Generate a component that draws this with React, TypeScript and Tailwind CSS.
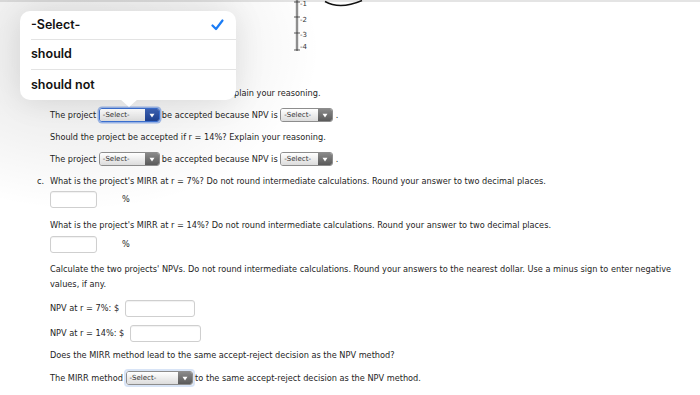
import React from "react";

const body = "font-['DejaVu_Sans',Verdana,sans-serif] text-[8.2px] text-[#1e1e1e]";

function Select({ w, focused = false }: { w: number; focused?: boolean }) {
  return (
    <span
      className={`inline-flex h-[14px] items-stretch overflow-hidden rounded-[3px] border align-middle ${
        focused
          ? "border-[#3b6fd0] shadow-[0_0_0_1.5px_rgba(80,130,220,0.55)]"
          : "border-[#8d8d8d]"
      }`}
      style={{ width: w }}
    >
      <span className="flex flex-1 items-center bg-gradient-to-b from-[#ffffff] to-[#dcdcdc] pl-[3px] text-[7px] leading-none text-[#333]">
        -Select-
      </span>
      <span
        className={`flex w-[14px] items-center justify-center ${
          focused
            ? "bg-gradient-to-b from-[#3d63b5] to-[#1d3f8e]"
            : "bg-gradient-to-b from-[#8a8a8a] to-[#5a5a5a]"
        }`}
      >
        <svg width="6" height="5" viewBox="0 0 6 5">
          <path d="M0.5 0.8 L5.5 0.8 L3 4.4 Z" fill="#fff" />
        </svg>
      </span>
    </span>
  );
}

function Input({ w }: { w: number }) {
  return (
    <span
      className="inline-block h-[17px] rounded-[3px] border border-[#cfcfcf] bg-white shadow-[inset_0_1px_1px_rgba(0,0,0,0.06)]"
      style={{ width: w }}
    />
  );
}

function Axis() {
  const ticks = [];
  for (let y = 1; y <= 50; y += 2) ticks.push(y);
  return (
    <svg width="120" height="56" viewBox="0 0 120 56">
      <line x1="7" y1="0" x2="7" y2="51" stroke="#444" strokeWidth="1" />
      {ticks.map((y) => (
        <line key={y} x1="5.5" y1={y} x2="8.5" y2={y} stroke="#666" strokeWidth="0.6" />
      ))}
      {[2, 17, 33, 50].map((y) => (
        <line key={"m" + y} x1="4" y1={y} x2="10" y2={y} stroke="#333" strokeWidth="0.8" />
      ))}
      <text x="10" y="6" fontSize="7" fill="#333" fontFamily="DejaVu Sans">-1</text>
      <text x="10" y="22" fontSize="7" fill="#333" fontFamily="DejaVu Sans">-2</text>
      <text x="10" y="37" fontSize="7" fill="#333" fontFamily="DejaVu Sans">-3</text>
      <text x="10" y="49" fontSize="7" fill="#333" fontFamily="DejaVu Sans">-4</text>
      <path d="M35 1.5 Q50 10 72 0.5" stroke="#111" strokeWidth="1.5" fill="none" />
    </svg>
  );
}

export default function App() {
  return (
    <div className="relative h-[395px] w-[700px] overflow-hidden bg-white">
      <div className="h-[2px] w-full bg-[#e4e4e4]" />
      {/* soft grey haze around the popover */}
      <div className="pointer-events-none absolute left-[-160px] top-[-110px] h-[320px] w-[480px] rounded-full bg-[radial-gradient(closest-side,rgba(0,0,0,0.09),rgba(0,0,0,0.05)_55%,rgba(0,0,0,0))]" />

      <div className={`${body} relative pl-[50px]`}>
        <div className="h-[82px] pl-[240px]">
          <div className="-mt-[2px]">
            <Axis />
          </div>
        </div>

        <div className="flex h-[22px] items-center">
          Should the project be accepted if r = 7%? Explain your reasoning.
        </div>
        <div className="flex h-[22px] items-center">
          The project&nbsp;<Select w={61} focused />
          <span className="ml-[2px]">be accepted because NPV is</span>&nbsp;
          <Select w={53} />
          &nbsp;.
        </div>
        <div className="flex h-[22px] items-center">
          Should the project be accepted if r = 14%? Explain your reasoning.
        </div>
        <div className="flex h-[22px] items-center">
          The project&nbsp;<Select w={61} />
          <span className="ml-[2px]">be accepted because NPV is</span>&nbsp;
          <Select w={53} />
          &nbsp;.
        </div>
        <div className="relative flex h-[22px] items-center">
          <span className="absolute left-[-13px]">c.</span>
          What is the project's MIRR at r = 7%? Do not round intermediate calculations. Round your answer to two decimal places.
        </div>
        <div className="-mt-[1px] flex h-[17px] items-center">
          <Input w={47} />
          <span className="ml-[25px]">%</span>
        </div>
        <div className="mt-[6px] flex h-[22px] items-center">
          What is the project's MIRR at r = 14%? Do not round intermediate calculations. Round your answer to two decimal places.
        </div>
        <div className="flex h-[17px] items-center">
          <Input w={47} />
          <span className="ml-[25px]">%</span>
        </div>
        <p className="mt-[9px] w-[630px] leading-[15px]">
          Calculate the two projects' NPVs. Do not round intermediate calculations. Round your answers to the nearest dollar. Use a minus sign to enter negative values, if any.
        </p>
        <div className="mt-[8px] flex h-[17px] items-center">
          NPV at r = 7%: $<span className="ml-[6px] inline-flex"><Input w={70} /></span>
        </div>
        <div className="mt-[8px] flex h-[17px] items-center">
          NPV at r = 14%: $<span className="ml-[6px] inline-flex"><Input w={71} /></span>
        </div>
        <div className="mt-[2px] flex h-[22px] items-center">
          Does the MIRR method lead to the same accept-reject decision as the NPV method?
        </div>
        <div className="mt-[1px] flex h-[22px] items-center">
          The MIRR method&nbsp;
          <span className="inline-flex rounded-[2px] shadow-[0_0_0_2px_rgba(190,210,240,0.6)]">
            <Select w={67} />
          </span>
          &nbsp;to the same accept-reject decision as the NPV method.
        </div>
      </div>

      {/* popover */}
      <div className="absolute left-[20px] top-[11px] w-[216px] rounded-[10px] bg-white font-['Inter','Liberation_Sans',sans-serif] text-[12.5px] font-semibold text-[#111] shadow-[0_2px_30px_rgba(0,0,0,0.10)]">
        <div className="ml-[11px] flex h-[29px] items-center justify-between border-b border-[#e3e3e3] pr-[12px]">
          <span>-Select-</span>
          <svg width="13" height="12" viewBox="0 0 13 12">
            <path d="M1.5 6.5 L5 10 L11.5 1.5" stroke="#1a7cf5" strokeWidth="2.2" fill="none" strokeLinecap="round" strokeLinejoin="round" />
          </svg>
        </div>
        <div className="ml-[11px] flex h-[30px] items-center border-b border-[#e3e3e3]">should</div>
        <div className="ml-[11px] flex h-[30px] items-center">should not</div>
        <div className="absolute left-[100px] top-[88px] h-0 w-0 border-l-[9px] border-r-[9px] border-t-[8px] border-l-transparent border-r-transparent border-t-white" />
      </div>
    </div>
  );
}
